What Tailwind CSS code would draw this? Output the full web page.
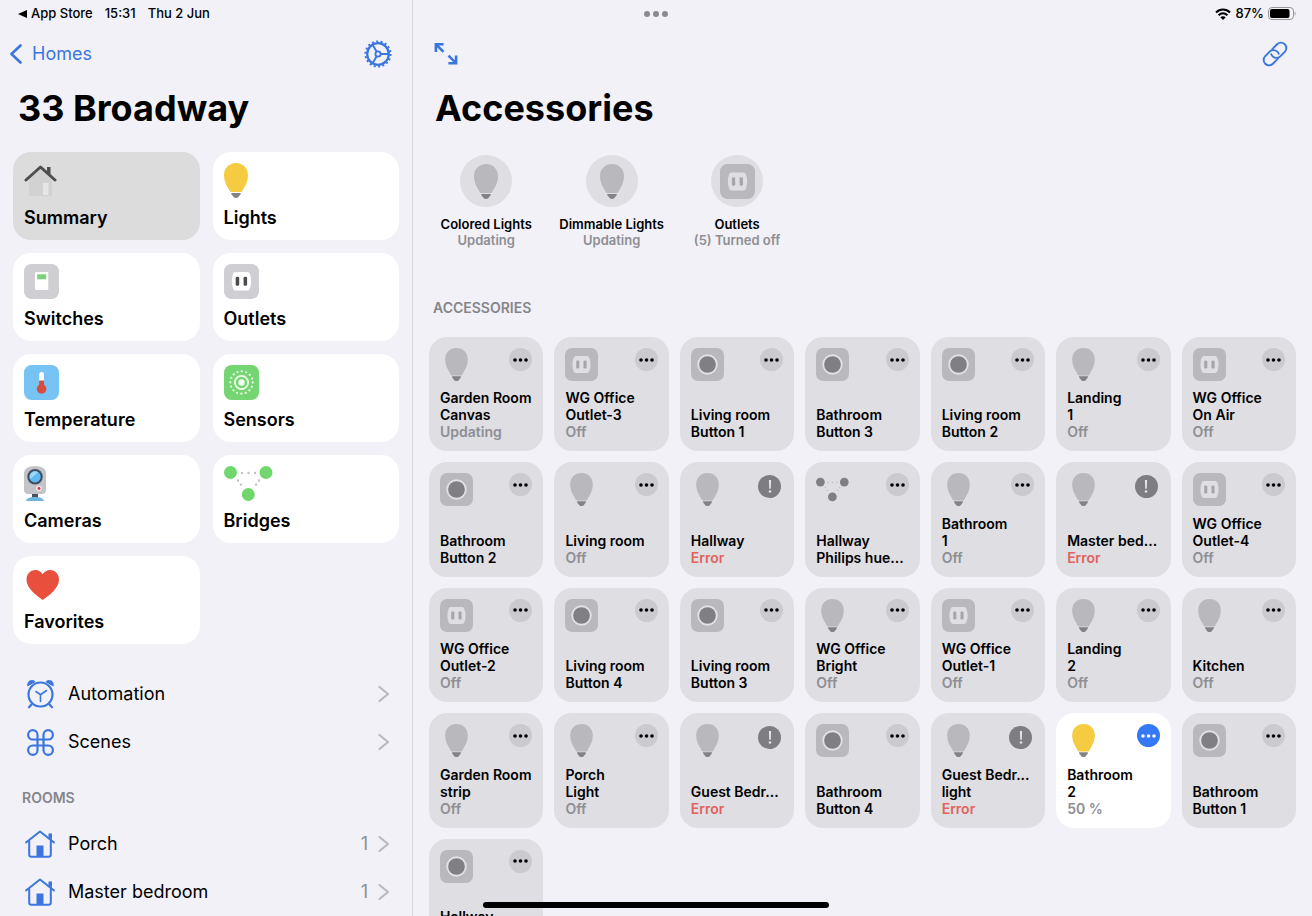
<!DOCTYPE html>
<html lang="en">
  <head>
    <meta charset="UTF-8" />
    <meta name="viewport" content="width=device-width, initial-scale=1.0" />
    <title>33 Broadway – Accessories</title>
    <script src="https://cdn.jsdelivr.net/npm/@tailwindcss/browser@4"></script>
  </head>
  <body class="h-screen overflow-hidden bg-[#f1f1f7] font-['Inter','Liberation_Sans',sans-serif] text-black">
    <!-- icon sprite -->
    <svg class="hidden">
      <symbol id="bulb" viewBox="0 0 24 35">
        <path fill="currentColor" d="M12 0C5 0 0 5 0 12c0 5 1.600 9 3.600 12.200.9 1.400 1.400 2.200 1.900 3.300.5 1.100 1.100 1.600 2.200 1.600h8.600c1.100 0 1.700-.5 2.200-1.600.5-1.100 1-1.900 1.900-3.300C22.400 21 24 17 24 12 24 5 19 0 12 0z" />
        <path fill="#828287" d="M7.300 30h9.400c0 1.300-.4 2.300-1.500 2.800-.6 1.500-1.700 2.200-3.200 2.200s-2.600-.7-3.200-2.200c-1.100-.5-1.500-1.500-1.500-2.800z" />
      </symbol>
      <symbol id="outlet" viewBox="0 0 35 35">
        <rect width="35" height="35" rx="7.500" fill="#cfcfd3" />
        <path fill="#fff" d="M12 8h11c1.600 0 2.300.6 2.900 2 1.700 4.500 1.700 10 0 14.500-.6 1.400-1.300 2-2.900 2H12c-1.600 0-2.300-.6-2.900-2-1.700-4.500-1.700-10 0-14.500.6-1.400 1.300-2 2.900-2z" />
        <rect x="11.700" y="12.800" width="3.500" height="9" rx="1.400" fill="#4b4b4d" />
        <rect x="19.600" y="12.800" width="3.500" height="9" rx="1.400" fill="#4b4b4d" />
      </symbol>
      <symbol id="outlet-off" viewBox="0 0 35 35">
        <rect width="35" height="35" rx="7.500" fill="#b8b8bd" />
        <path fill="#dedee3" d="M12 8.500h11c1.600 0 2.300.6 2.900 2 1.700 4.300 1.700 9.700 0 14-.6 1.400-1.300 2-2.900 2H12c-1.600 0-2.300-.6-2.900-2-1.700-4.300-1.700-9.700 0-14 .6-1.400 1.300-2 2.900-2z" />
        <rect x="11.900" y="13.200" width="3.300" height="8.600" rx="1.300" fill="#a5a5aa" />
        <rect x="19.600" y="13.200" width="3.300" height="8.600" rx="1.300" fill="#a5a5aa" />
      </symbol>
      <symbol id="button" viewBox="0 0 32 32">
        <rect width="32" height="32" rx="7" fill="#b8b8bd" />
        <circle cx="16" cy="16" r="9" fill="#7f7f84" stroke="#e2e2e6" stroke-width="1.800" />
      </symbol>
      <symbol id="bridge" viewBox="0 0 49 35">
        <g fill="none" stroke="#c3bfc3" stroke-width="2.400" stroke-linecap="round">
          <path stroke-dasharray="0 6.500" d="M18 7h14" />
          <path stroke-dasharray="0 5" d="M14 14.500l3.500 5M35 14.500l-3.500 5" />
        </g>
        <g fill="currentColor">
          <circle cx="6.500" cy="6.500" r="6.500" />
          <circle cx="42" cy="6.500" r="6.500" />
          <circle cx="24.300" cy="28.500" r="6.500" />
        </g>
      </symbol>
      <symbol id="house" viewBox="0 0 30 28">
        <g fill="none" stroke="currentColor" stroke-width="2" stroke-linecap="round" stroke-linejoin="round">
          <path d="M1 12.500L15 1.500l14 11" />
          <path d="M4.200 11v13.500c0 1.500.7 2.200 2.200 2.200h17.200c1.500 0 2.200-.7 2.200-2.200V11" />
        </g>
        <path fill="currentColor" d="M23.500 3.500H27v6.600l-3.500-2.800zM11.500 15.500h7v11.200h-7z" />
      </symbol>
      <symbol id="chevron" viewBox="0 0 12 18">
        <path fill="none" stroke="currentColor" stroke-width="2.200" stroke-linecap="round" stroke-linejoin="round" d="M1.500 2L10 9l-8.500 7" />
      </symbol>
    </svg>

    <div class="flex h-full">
      <!-- sidebar -->
      <aside class="w-[413px] shrink-0 overflow-hidden border-r border-[#d8d8dd]">
        <div class="flex h-[27px] items-center gap-3 pl-[18px] text-[13px] font-medium">
          <a href="#" class="flex items-center gap-1">
            <svg class="h-2 w-[9px]" viewBox="0 0 9 8"><path d="M0 4l9-4v8z" /></svg>
            App Store
          </a>
          <span>15:31</span>
          <span>Thu 2 Jun</span>
        </div>

        <nav class="flex h-[54px] items-center justify-between pr-5 pl-[10px] text-[#3b76de]">
          <a href="#" class="flex items-center gap-[10px] text-lg">
            <svg class="h-5 w-3" viewBox="0 0 12 20"><path d="M10.500 1.500L1.500 10l9 8.500" fill="none" stroke="currentColor" stroke-width="2.600" stroke-linecap="round" stroke-linejoin="round" /></svg>
            Homes
          </a>
          <button aria-label="Settings">
            <svg class="size-7" viewBox="0 0 28 28" fill="none" stroke="currentColor">
              <circle cx="14" cy="14" r="10.800" stroke-width="2.200" />
              <circle cx="14" cy="14" r="12.600" stroke-width="2" stroke-dasharray="2 2.398" />
              <circle cx="14" cy="14" r="2.600" stroke-width="1.800" />
              <path stroke-width="1.900" d="M16.600 14H25M12.700 11.700L8.500 4.600M12.700 16.300l-4.200 7.100" />
            </svg>
          </button>
        </nav>

        <h1 class="pt-[5px] pl-[18px] text-4xl/[44px] font-bold">33 Broadway</h1>

        <div class="mt-[22px] grid grid-cols-2 gap-[13px] px-[13px] text-lg/6 font-semibold">
          <a href="#" class="flex h-22 flex-col justify-between rounded-[18px] bg-[#dcdcdc] px-[11px] pt-[11px] pb-[10px]">
            <svg class="h-[35px] w-[33px]" viewBox="0 0 33 35">
              <path fill="#d2d2d3" d="M5 15.500L16.500 6 28 15.500V33H5z" />
              <path fill="#e6e6e6" d="M19 20h5.500v12H19z" />
              <path fill="#4e4e4e" d="M23 4h3.500v8L23 9z" />
              <path fill="none" stroke="#4e4e4e" stroke-width="3" stroke-linecap="round" stroke-linejoin="round" d="M2 17L16.500 4 31 17" />
            </svg>
            Summary
          </a>
          <a href="#" class="flex h-22 flex-col justify-between rounded-[18px] bg-white px-[11px] pt-[11px] pb-[10px]">
            <svg class="h-[35px] w-6 text-[#f5cb42]"><use href="#bulb" /></svg>
            Lights
          </a>
          <a href="#" class="flex h-22 flex-col justify-between rounded-[18px] bg-white px-[11px] pt-[11px] pb-[10px]">
            <svg class="size-[35px]" viewBox="0 0 35 35">
              <rect width="35" height="35" rx="7.500" fill="#cfcfd3" />
              <rect x="11" y="8" width="13.300" height="18" rx="1" fill="#fff" />
              <rect x="13.200" y="10.300" width="9" height="5" fill="#79d279" />
            </svg>
            Switches
          </a>
          <a href="#" class="flex h-22 flex-col justify-between rounded-[18px] bg-white px-[11px] pt-[11px] pb-[10px]">
            <svg class="size-[35px]"><use href="#outlet" /></svg>
            Outlets
          </a>
          <a href="#" class="flex h-22 flex-col justify-between rounded-[18px] bg-white px-[11px] pt-[11px] pb-[10px]">
            <svg class="size-[35px]" viewBox="0 0 35 35">
              <rect width="35" height="35" rx="7.500" fill="#77c3f3" />
              <path fill="#fff" d="M15.200 16V9.300a2.400 2.400 0 0 1 4.800 0V16z" />
              <path fill="#dc4a3d" d="M15.200 15.500H20v4.300a4.800 4.800 0 1 1-4.800 0z" />
            </svg>
            Temperature
          </a>
          <a href="#" class="flex h-22 flex-col justify-between rounded-[18px] bg-white px-[11px] pt-[11px] pb-[10px]">
            <svg class="size-[35px]" viewBox="0 0 35 35">
              <rect width="35" height="35" rx="7.500" fill="#75d572" />
              <g fill="none" stroke="#f0fbef">
                <circle cx="17.500" cy="17.500" r="11.200" stroke-width="2.300" stroke-linecap="round" stroke-dasharray="0 4.398" />
                <circle cx="17.500" cy="17.500" r="6.600" stroke-width="1.800" />
              </g>
              <circle cx="17.500" cy="17.500" r="3.200" fill="#f0fbef" />
            </svg>
            Sensors
          </a>
          <a href="#" class="flex h-22 flex-col justify-between rounded-[18px] bg-white px-[11px] pt-[11px] pb-[10px]">
            <svg class="h-[35px] w-[22px]" viewBox="0 0 22 35">
              <path fill="#46515d" d="M8 27h6v5H8z" />
              <path fill="#6cb6dd" d="M2 35c.5-2.500 4-4 9-4s8.500 1.500 9 4z" />
              <path fill="#c4c4c8" d="M0 7c0-4 4-7 11-7s11 3 11 7v17c0 2.800-1.500 4-4 4H4c-2.500 0-4-1.200-4-4z" />
              <circle cx="11" cy="10.700" r="7.700" fill="#3e4e5e" />
              <circle cx="11" cy="10.700" r="5.700" fill="#5db9ef" />
              <path fill="#9bd8fa" d="M6.500 13a5.200 5.200 0 0 1 7.500-6.700z" />
              <circle cx="15" cy="22.500" r="2.800" fill="#f3e9eb" />
              <circle cx="15" cy="22.500" r="1.400" fill="#cf3448" />
            </svg>
            Cameras
          </a>
          <a href="#" class="flex h-22 flex-col justify-between rounded-[18px] bg-white px-[11px] pt-[11px] pb-[10px]">
            <svg class="h-[35px] w-[49px] text-[#70d76c]"><use href="#bridge" /></svg>
            Bridges
          </a>
          <a href="#" class="flex h-22 flex-col justify-between rounded-[18px] bg-white px-[11px] pt-[11px] pb-[10px]">
            <svg class="h-[35px] w-9" viewBox="0 0 36 35">
              <path fill="#e94f3d" d="M18.700 33C12 28 2.500 21.500 2.500 12.500 2.500 7 6.500 3 11.300 3c3.200 0 5.900 1.700 7.400 4.300C20.200 4.700 22.900 3 26.100 3 31 3 35 7 35 12.500 35 21.500 25.400 28 18.700 33z" />
            </svg>
            Favorites
          </a>
        </div>

        <ul class="mt-[26px] text-lg">
          <li>
            <a href="#" class="flex h-12 items-center pr-[22px] pl-[25px]">
              <svg class="mr-[13px] size-[30px] text-[#3b76de]" viewBox="0 0 30 30">
                <path fill="currentColor" d="M2.500 7.500C1.500 4.500 3.500 1 7 1c1.500 0 3 .8 3.500 2zM28.500 7.500C29.500 4.500 27.500 1 24 1c-1.500 0-3 .8-3.500 2z" />
                <g fill="none" stroke="currentColor" stroke-linecap="round">
                  <circle cx="15.500" cy="15.500" r="12" stroke-width="2.200" />
                  <path stroke-width="2.200" d="M6.500 25.500l-2.500 2.800M24.500 25.500l2.500 2.800" />
                  <path stroke-width="1.600" d="M11 12.500l4.500 3.200 6-4.200M15.500 16v6.500" />
                </g>
              </svg>
              <span class="flex-1">Automation</span>
              <svg class="h-[18px] w-3 text-[#b9b9be]"><use href="#chevron" /></svg>
            </a>
          </li>
          <li>
            <a href="#" class="flex h-12 items-center pr-[22px] pl-[25px]">
              <svg class="mr-[13px] size-[30px] text-[#3b76de]" viewBox="0 0 30 30">
                <path fill="none" stroke="currentColor" stroke-width="2.200" d="M12.500 12.500h6v6h-6zM12.500 12.500H7.800a4.700 4.700 0 1 1 4.700-4.700zM18.500 12.500V7.800a4.700 4.700 0 1 1 4.700 4.700zM12.500 18.500v4.700a4.700 4.700 0 1 1-4.700-4.700zM18.500 18.500h4.700a4.700 4.700 0 1 1-4.700 4.700z" />
              </svg>
              <span class="flex-1">Scenes</span>
              <svg class="h-[18px] w-3 text-[#b9b9be]"><use href="#chevron" /></svg>
            </a>
          </li>
        </ul>

        <h2 class="flex h-[54px] items-end pb-3 pl-[22px] text-sm/5 font-semibold text-[#85858a]">ROOMS</h2>
        <ul class="text-lg">
          <li>
            <a href="#" class="flex h-12 items-center pr-[22px] pl-[25px]">
              <svg class="mr-[13px] h-7 w-[30px] text-[#3b76de]"><use href="#house" /></svg>
              <span class="flex-1">Porch</span>
              <span class="mr-[10px] text-[#8e8e93]">1</span>
              <svg class="h-[18px] w-3 text-[#b9b9be]"><use href="#chevron" /></svg>
            </a>
          </li>
          <li>
            <a href="#" class="flex h-12 items-center pr-[22px] pl-[25px]">
              <svg class="mr-[13px] h-7 w-[30px] text-[#3b76de]"><use href="#house" /></svg>
              <span class="flex-1">Master bedroom</span>
              <span class="mr-[10px] text-[#8e8e93]">1</span>
              <svg class="h-[18px] w-3 text-[#b9b9be]"><use href="#chevron" /></svg>
            </a>
          </li>
        </ul>
      </aside>

      <!-- content -->
      <main class="min-w-0 flex-1 overflow-hidden">
        <div class="flex h-[27px] items-center justify-end gap-1 pr-4 text-[13px] font-medium">
          <svg class="h-3 w-4" viewBox="0 0 16 12" fill="none" stroke="#000" stroke-width="2">
            <path d="M1 4.500c4-4 10-4 14 0M3.600 7.200c2.600-2.500 6.200-2.500 8.800 0" />
            <path fill="#000" stroke="none" d="M8 12L5.300 9.300c1.500-1.400 3.900-1.400 5.400 0z" />
          </svg>
          <span>87%</span>
          <svg class="h-[13px] w-7" viewBox="0 0 28 13">
            <rect x=".5" y=".5" width="25" height="12" rx="3.500" fill="none" stroke="#98989c" />
            <rect x="2" y="2" width="19.500" height="9" rx="2" />
            <path fill="#98989c" d="M26.700 4.500c1.300.5 1.300 3.500 0 4z" />
          </svg>
        </div>

        <div class="flex h-[54px] items-center justify-between pr-6 pl-[21px] text-[#3b76de]">
          <button aria-label="Full screen">
            <svg class="size-6" viewBox="0 0 24 24" fill="none" stroke="currentColor" stroke-width="2.600">
              <path d="M1.900 10V2.300h7.700M2.500 2.900l7 7M22.100 13.500v7.700h-7.700M21.500 20.600l-7-7" />
            </svg>
          </button>
          <button aria-label="Share link">
            <svg class="size-[26px]" viewBox="0 0 26 26" fill="none" stroke="currentColor" stroke-width="1.900" stroke-linecap="round">
              <g transform="rotate(-45 13 13)">
                <path d="M11.500 18.400H4.600a5.400 5.400 0 0 1 0-10.800h6.300a5.400 5.400 0 0 1 5.400 5.400c0 1-.2 1.800-.6 2.500" />
                <path d="M14.500 7.600h6.900a5.400 5.400 0 0 1 0 10.800h-6.300A5.400 5.400 0 0 1 9.700 13c0-1 .2-1.800.6-2.500" />
              </g>
            </svg>
          </button>
        </div>

        <h1 class="pt-[5px] pl-[22px] text-4xl/[44px] font-bold">Accessories</h1>

        <div class="mt-[25px] grid grid-cols-7 gap-[11px] px-4 text-center text-[13px]/4 font-semibold whitespace-nowrap">
          <a href="#" class="flex flex-col items-center">
            <span class="mb-[9px] flex size-[52px] items-center justify-center rounded-full bg-[#dedee3]">
              <svg class="h-[35px] w-6 text-[#b8b8bd]"><use href="#bulb" /></svg>
            </span>
            Colored Lights
            <span class="text-[#8e8e93]">Updating</span>
          </a>
          <a href="#" class="flex flex-col items-center">
            <span class="mb-[9px] flex size-[52px] items-center justify-center rounded-full bg-[#dedee3]">
              <svg class="h-[35px] w-6 text-[#b8b8bd]"><use href="#bulb" /></svg>
            </span>
            Dimmable Lights
            <span class="text-[#8e8e93]">Updating</span>
          </a>
          <a href="#" class="flex flex-col items-center">
            <span class="mb-[9px] flex size-[52px] items-center justify-center rounded-full bg-[#dedee3]">
              <svg class="size-[35px]"><use href="#outlet-off" /></svg>
            </span>
            Outlets
            <span class="text-[#8e8e93]">(5) Turned off</span>
          </a>
        </div>

        <h2 class="mt-[50px] pl-5 text-sm/5 font-semibold text-[#85858a]">ACCESSORIES</h2>
        <div id="accessories" class="mt-[19px] grid grid-cols-7 gap-[11px] px-4"></div>
      </main>
    </div>

    <!-- multitasking dots and home indicator float over both columns -->
    <button aria-label="Multitasking" class="fixed top-[11px] left-1/2 flex -translate-x-1/2 gap-[3px]">
      <span class="size-[6px] rounded-full bg-[#8b8b8f]"></span>
      <span class="size-[6px] rounded-full bg-[#8b8b8f]"></span>
      <span class="size-[6px] rounded-full bg-[#8b8b8f]"></span>
    </button>
    <div class="fixed bottom-2 left-1/2 h-[6px] w-[346px] -translate-x-1/2 rounded-full bg-black"></div>

    <script>
      const accessories = [
        { icon: "bulb", name: "Garden Room\nCanvas", status: "Updating" },
        { icon: "outlet", name: "WG Office\nOutlet-3", status: "Off" },
        { icon: "button", name: "Living room\nButton 1" },
        { icon: "button", name: "Bathroom\nButton 3" },
        { icon: "button", name: "Living room\nButton 2" },
        { icon: "bulb", name: "Landing\n1", status: "Off" },
        { icon: "outlet", name: "WG Office\nOn Air", status: "Off" },
        { icon: "button", name: "Bathroom\nButton 2" },
        { icon: "bulb", name: "Living room", status: "Off" },
        { icon: "bulb", name: "Hallway", status: "Error" },
        { icon: "bridge", name: "Hallway\nPhilips hue..." },
        { icon: "bulb", name: "Bathroom\n1", status: "Off" },
        { icon: "bulb", name: "Master bed...", status: "Error" },
        { icon: "outlet", name: "WG Office\nOutlet-4", status: "Off" },
        { icon: "outlet", name: "WG Office\nOutlet-2", status: "Off" },
        { icon: "button", name: "Living room\nButton 4" },
        { icon: "button", name: "Living room\nButton 3" },
        { icon: "bulb", name: "WG Office\nBright", status: "Off" },
        { icon: "outlet", name: "WG Office\nOutlet-1", status: "Off" },
        { icon: "bulb", name: "Landing\n2", status: "Off" },
        { icon: "bulb", name: "Kitchen", status: "Off" },
        { icon: "bulb", name: "Garden Room\nstrip", status: "Off" },
        { icon: "bulb", name: "Porch\nLight", status: "Off" },
        { icon: "bulb", name: "Guest Bedr...", status: "Error" },
        { icon: "button", name: "Bathroom\nButton 4" },
        { icon: "bulb", name: "Guest Bedr...\nlight", status: "Error" },
        { icon: "bulb", name: "Bathroom\n2", status: "50 %", on: true },
        { icon: "button", name: "Bathroom\nButton 1" },
        { icon: "button", name: "Hallway\nButton" },
      ];

      const icons = {
        bulb: '<svg class="mx-[5px] h-[33px] w-[23px] text-[#b8b8bd]"><use href="#bulb" /></svg>',
        bulbOn: '<svg class="mx-[5px] h-[33px] w-[23px] text-[#f5cb42]"><use href="#bulb" /></svg>',
        outlet: '<svg class="size-[33px]"><use href="#outlet-off" /></svg>',
        button: '<svg class="size-[33px]"><use href="#button" /></svg>',
        bridge: '<svg class="h-[33px] w-[33px] text-[#7f7f84]"><use href="#bridge" /></svg>',
      };

      const dots = '<svg class="h-1 w-[15px]" viewBox="0 0 15 4" fill="currentColor"><circle cx="2" cy="2" r="1.800" /><circle cx="7.500" cy="2" r="1.800" /><circle cx="13" cy="2" r="1.800" /></svg>';

      function badge(a) {
        if (a.status === "Error") {
          return `<button aria-label="Show error" class="mt-0.5 mr-0.5 flex size-[23px] items-center justify-center rounded-full bg-[#7d7d82] text-[#e4e4e8]">
            <svg class="h-[13px] w-1" viewBox="0 0 4 13" fill="currentColor"><path d="M.9 0h2.200l-.3 8.800H1.200z" /><circle cx="2" cy="11.500" r="1.300" /></svg>
          </button>`;
        }
        const colors = a.on ? "bg-[#3478f6] text-white" : "bg-[#cacacf] text-black";
        return `<button aria-label="Details" class="flex size-[23px] items-center justify-center rounded-full ${colors}">${dots}</button>`;
      }

      document.getElementById("accessories").innerHTML = accessories
        .map((a) => `
          <article class="flex aspect-square flex-col justify-between rounded-[18px] p-[11px] text-sm/[17px] font-semibold ${a.on ? "bg-white" : "bg-[#dedee3]"}">
            <div class="flex items-start justify-between">
              ${icons[a.on ? "bulbOn" : a.icon]}
              ${badge(a)}
            </div>
            <div>
              <h3 class="whitespace-pre">${a.name}</h3>
              ${a.status ? `<p class="${a.status === "Error" ? "text-[#e2625c]" : "text-[#8e8e93]"}">${a.status}</p>` : ""}
            </div>
          </article>`)
        .join("");
    </script>
  </body>
</html>
